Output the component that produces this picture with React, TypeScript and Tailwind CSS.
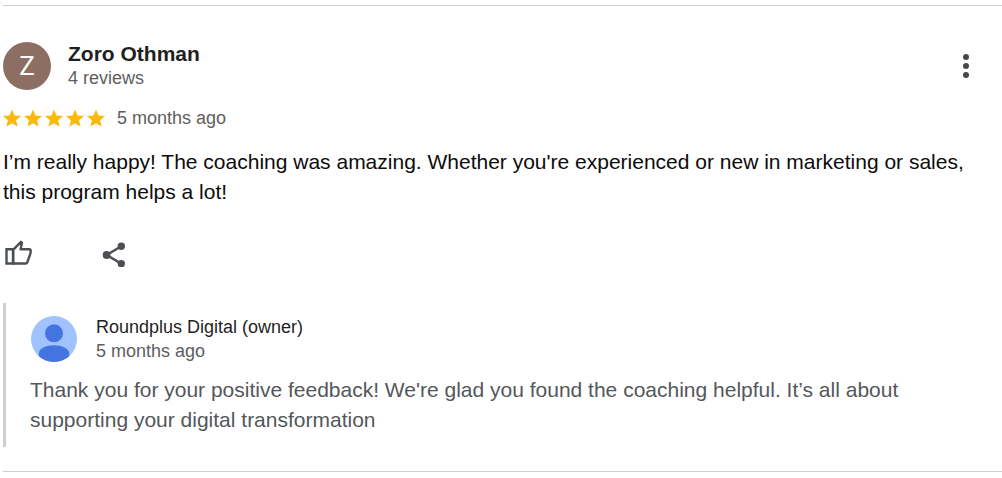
import React from 'react';

const Star: React.FC = () => (
  <svg className="h-[18px] w-[18px]" viewBox="2 2 20 19" fill="#fbb90d" aria-hidden="true">
    <path d="M12 17.27 18.18 21l-1.64-7.03L22 9.24l-7.19-.61L12 2 9.19 8.63 2 9.24l5.46 4.73L5.82 21z" />
  </svg>
);

const ThumbUpIcon: React.FC = () => (
  <svg className="h-7 w-7" viewBox="0 0 28 28" fill="none" stroke="#4b4f54" strokeWidth="2.4" aria-hidden="true">
    <path d="M1.5 10.3h6.6v14.2H1.5z" />
    <path d="M8.1 10.8 16 2.8l.9 1-1.3 6.5h8.5q1.8.2 1.6 2l-.3 2.4-3.1 8.7q-.4 1.1-1.6 1.1H8.1z" strokeLinejoin="round" />
  </svg>
);

const ShareIcon: React.FC = () => (
  <svg className="h-7 w-7" viewBox="0 0 28 28" fill="#4b4f54" aria-hidden="true">
    <path d="M20.3 7.3 5.6 16l14.7 8.6" fill="none" stroke="#4b4f54" strokeWidth="2.4" />
    <circle cx="20.3" cy="7.3" r="3.7" />
    <circle cx="5.6" cy="16" r="3.9" />
    <circle cx="20.3" cy="24.6" r="3.7" />
  </svg>
);

const OwnerAvatar: React.FC = () => (
  <svg className="h-12 w-12 shrink-0" viewBox="0 0 48 48" aria-hidden="true">
    <clipPath id="owner-clip">
      <circle cx="24" cy="24" r="23" />
    </clipPath>
    <circle cx="24" cy="24" r="23" fill="#a0c3ff" />
    <g fill="#4374e0" clipPath="url(#owner-clip)">
      <circle cx="24" cy="18.3" r="9" />
      <path d="M8.8 38.5c0-5 7.5-8.2 15.2-8.2s15.2 3.2 15.2 8.2V48H8.8z" />
    </g>
  </svg>
);

const App: React.FC = () => {
  return (
    <main className="bg-white pl-[3px] font-['Liberation_Sans',Arial,sans-serif]">
      <article className="mt-[5px] border-y border-[#cfcfcf] pt-9 pb-6">
        <header className="flex items-center justify-between pr-6">
          <div className="flex items-center gap-[17px]">
            <div className="flex h-12 w-12 items-center justify-center rounded-full bg-[#8d6e63] font-[Roboto,sans-serif] text-[26px] text-white">Z</div>
            <div>
              <h2 className="text-[21px] leading-6 font-bold text-[#1f1f1f]">Zoro Othman</h2>
              <p className="text-[18px] leading-6 text-[#5e5e5e]">4 reviews</p>
            </div>
          </div>
          <button type="button" aria-label="More options" className="flex w-6 justify-center">
            <svg className="h-6 w-2" viewBox="0 0 8 24" fill="#474747" aria-hidden="true">
              <circle cx="4" cy="3" r="3" />
              <circle cx="4" cy="12" r="3" />
              <circle cx="4" cy="21" r="3" />
            </svg>
          </button>
        </header>

        <div className="mt-4 flex items-center gap-3">
          <div className="flex gap-[3px]" role="img" aria-label="5 out of 5 stars">
            {[1, 2, 3, 4, 5].map((n) => (
              <Star key={n} />
            ))}
          </div>
          <span className="text-[18px] leading-6 text-[#5e5e5e]">5 months ago</span>
        </div>

        <p className="mt-[17px] pr-6 text-[21px] leading-[30px] text-[#0c0c0c]">
          I’m really happy! The coaching was amazing. Whether you're experienced or new in marketing or sales, this program helps a lot!
        </p>

        <div className="mt-8 flex gap-[68px] pl-[2px]">
          <button type="button" aria-label="Like">
            <ThumbUpIcon />
          </button>
          <button type="button" aria-label="Share">
            <ShareIcon />
          </button>
        </div>

        {/* Owner reply */}
        <section className="mt-9 border-l-3 border-[#cfcfcf] pt-3 pr-6 pb-3 pl-6">
          <div className="flex items-center gap-[18px]">
            <OwnerAvatar />
            <div>
              <h3 className="text-[18px] leading-6 text-[#1f1f1f]">Roundplus Digital (owner)</h3>
              <p className="text-[18px] leading-6 text-[#5e5e5e]">5 months ago</p>
            </div>
          </div>
          <p className="mt-3 text-[21px] leading-[30px] text-[#54575b]">
            Thank you for your positive feedback! We're glad you found the coaching helpful. It’s all about supporting your digital transformation
          </p>
        </section>
      </article>
    </main>
  );
};

export default App;
